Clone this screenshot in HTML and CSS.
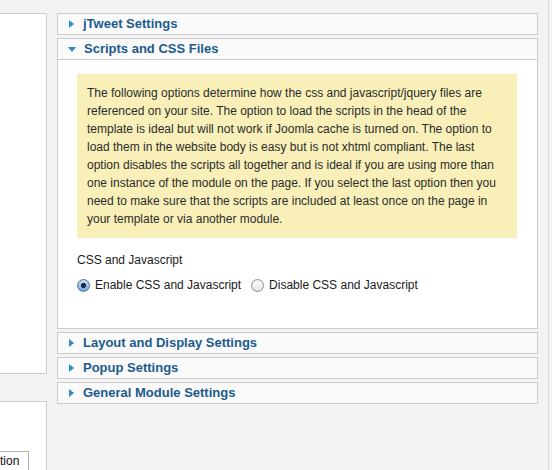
FILE: index.html
```html
<!DOCTYPE html>
<html lang="en">
<head>
<meta charset="utf-8">
<title>Module settings</title>
<link rel="stylesheet" href="styles.css">
</head>
<body>
<div class="page">
  <aside class="side">
    <div class="side-box side-top"></div>
    <div class="side-box side-bottom">
      <span class="side-input">tion</span>
    </div>
  </aside>

  <main class="panes">
    <section class="pane">
      <h3 class="pane-head"><span class="arrow arrow-right"></span><span class="pane-title">jTweet Settings</span></h3>
    </section>

    <section class="pane pane-open">
      <h3 class="pane-head"><span class="arrow arrow-down"></span><span class="pane-title">Scripts and CSS Files</span></h3>
      <div class="pane-body">
        <p class="tip">The following options determine how the css and javascript/jquery files are<br>referenced on your site. The option to load the scripts in the head of the<br>template is ideal but will not work if Joomla cache is turned on. The option to<br>load them in the website body is easy but is not xhtml compliant. The last<br>option disables the scripts all together and is ideal if you are using more than<br>one instance of the module on the page. If you select the last option then you<br>need to make sure that the scripts are included at least once on the page in<br>your template or via another module.</p>
        <div class="field-label">CSS and Javascript</div>
        <div class="radios">
          <label class="radio"><input type="radio" name="css" checked><span>Enable CSS and Javascript</span></label>
          <label class="radio"><input type="radio" name="css"><span>Disable CSS and Javascript</span></label>
        </div>
      </div>
    </section>

    <section class="pane">
      <h3 class="pane-head"><span class="arrow arrow-right"></span><span class="pane-title">Layout and Display Settings</span></h3>
    </section>
    <section class="pane">
      <h3 class="pane-head"><span class="arrow arrow-right"></span><span class="pane-title">Popup Settings</span></h3>
    </section>
    <section class="pane">
      <h3 class="pane-head"><span class="arrow arrow-right"></span><span class="pane-title">General Module Settings</span></h3>
    </section>
  </main>

  <div class="edge"></div>
</div>
</body>
</html>
```

FILE: styles.css
```css
html, body {
  margin: 0;
  padding: 0;
}

body {
  background: #f3f3f3;
  font-family: "Liberation Sans", Arial, Helvetica, sans-serif;
  font-size: 12px;
  color: #222;
  overflow: hidden;
}

.page {
  display: flex;
  height: 470px;
  padding-top: 13px;
  box-sizing: border-box;
}

/* left column */
.side {
  width: 47px;
  flex: 0 0 47px;
  display: flex;
  flex-direction: column;
}

.side-box {
  background: #fff;
  border: 1px solid #cccccc;
  border-left: none;
}

.side-top {
  height: 360px;
}

.side-bottom {
  margin-top: 27px;
  flex: 1;
  border-bottom: none;
}

.side-input {
  display: block;
  width: 28px;
  height: 18px;
  margin-top: 49px;
  border: 1px solid #b5b5b5;
  border-left: none;
  border-bottom: none;
  background: #fff;
  line-height: 18px;
  font-size: 12px;
  color: #111;
  overflow: hidden;
  white-space: nowrap;
}

/* panes */
.panes {
  margin-left: 10px;
  width: 481px;
  flex: 0 0 481px;
  display: flex;
  flex-direction: column;
  gap: 3px;
}

.pane {
  margin: 0;
}

.pane-head {
  margin: 0;
  height: 20px;
  display: flex;
  align-items: center;
  padding-left: 11px;
  background: #fafafa;
  border: 1px solid #cccccc;
  font-size: 13px;
  font-weight: bold;
  color: #1b5a8c;
}

.pane-title {
  line-height: 20px;
}

.arrow {
  display: block;
  width: 0;
  height: 0;
}

.arrow-right {
  border-top: 4px solid transparent;
  border-bottom: 4px solid transparent;
  border-left: 5px solid #2d8cc4;
  margin-right: 9px;
}

.arrow-down {
  border-left: 4px solid transparent;
  border-right: 4px solid transparent;
  border-top: 5px solid #2d8cc4;
  margin-left: -1px;
  margin-right: 8px;
}

.pane-body {
  background: #fff;
  border: 1px solid #cccccc;
  border-top: none;
  padding: 14px 20px 35px 19px;
}

.tip {
  margin: 0;
  background: #f9f0b9;
  padding: 10px 4px 10px 10px;
  line-height: 18px;
  font-size: 12px;
  color: #2b2b2b;
  white-space: nowrap;
}

.field-label {
  margin-top: 14px;
  line-height: 16px;
  color: #1a1a1a;
}

.radios {
  margin-top: 9px;
  display: flex;
  align-items: center;
  gap: 10px;
  line-height: 16px;
}

.radio {
  display: flex;
  align-items: center;
  gap: 5px;
  color: #1a1a1a;
}

.radio input {
  -webkit-appearance: none;
  appearance: none;
  margin: 0;
  width: 13px;
  height: 13px;
  border-radius: 50%;
  border: 1px solid #8e8e8e;
  box-sizing: border-box;
  background: linear-gradient(#ffffff, #e2e2e2);
  box-shadow: inset 0 1px 1px rgba(0, 0, 0, 0.08);
}

.radio input:checked {
  border-color: #4f76a3;
  background:
    radial-gradient(circle at 50% 50%, #1b2c45 0, #1b2c45 2.2px, transparent 2.9px),
    linear-gradient(#cfe2f6, #6fa6dd);
}

.edge {
  margin-left: 10px;
  margin-top: -13px;
  width: 1px;
  height: 470px;
  background: #dcdcdc;
}
```
